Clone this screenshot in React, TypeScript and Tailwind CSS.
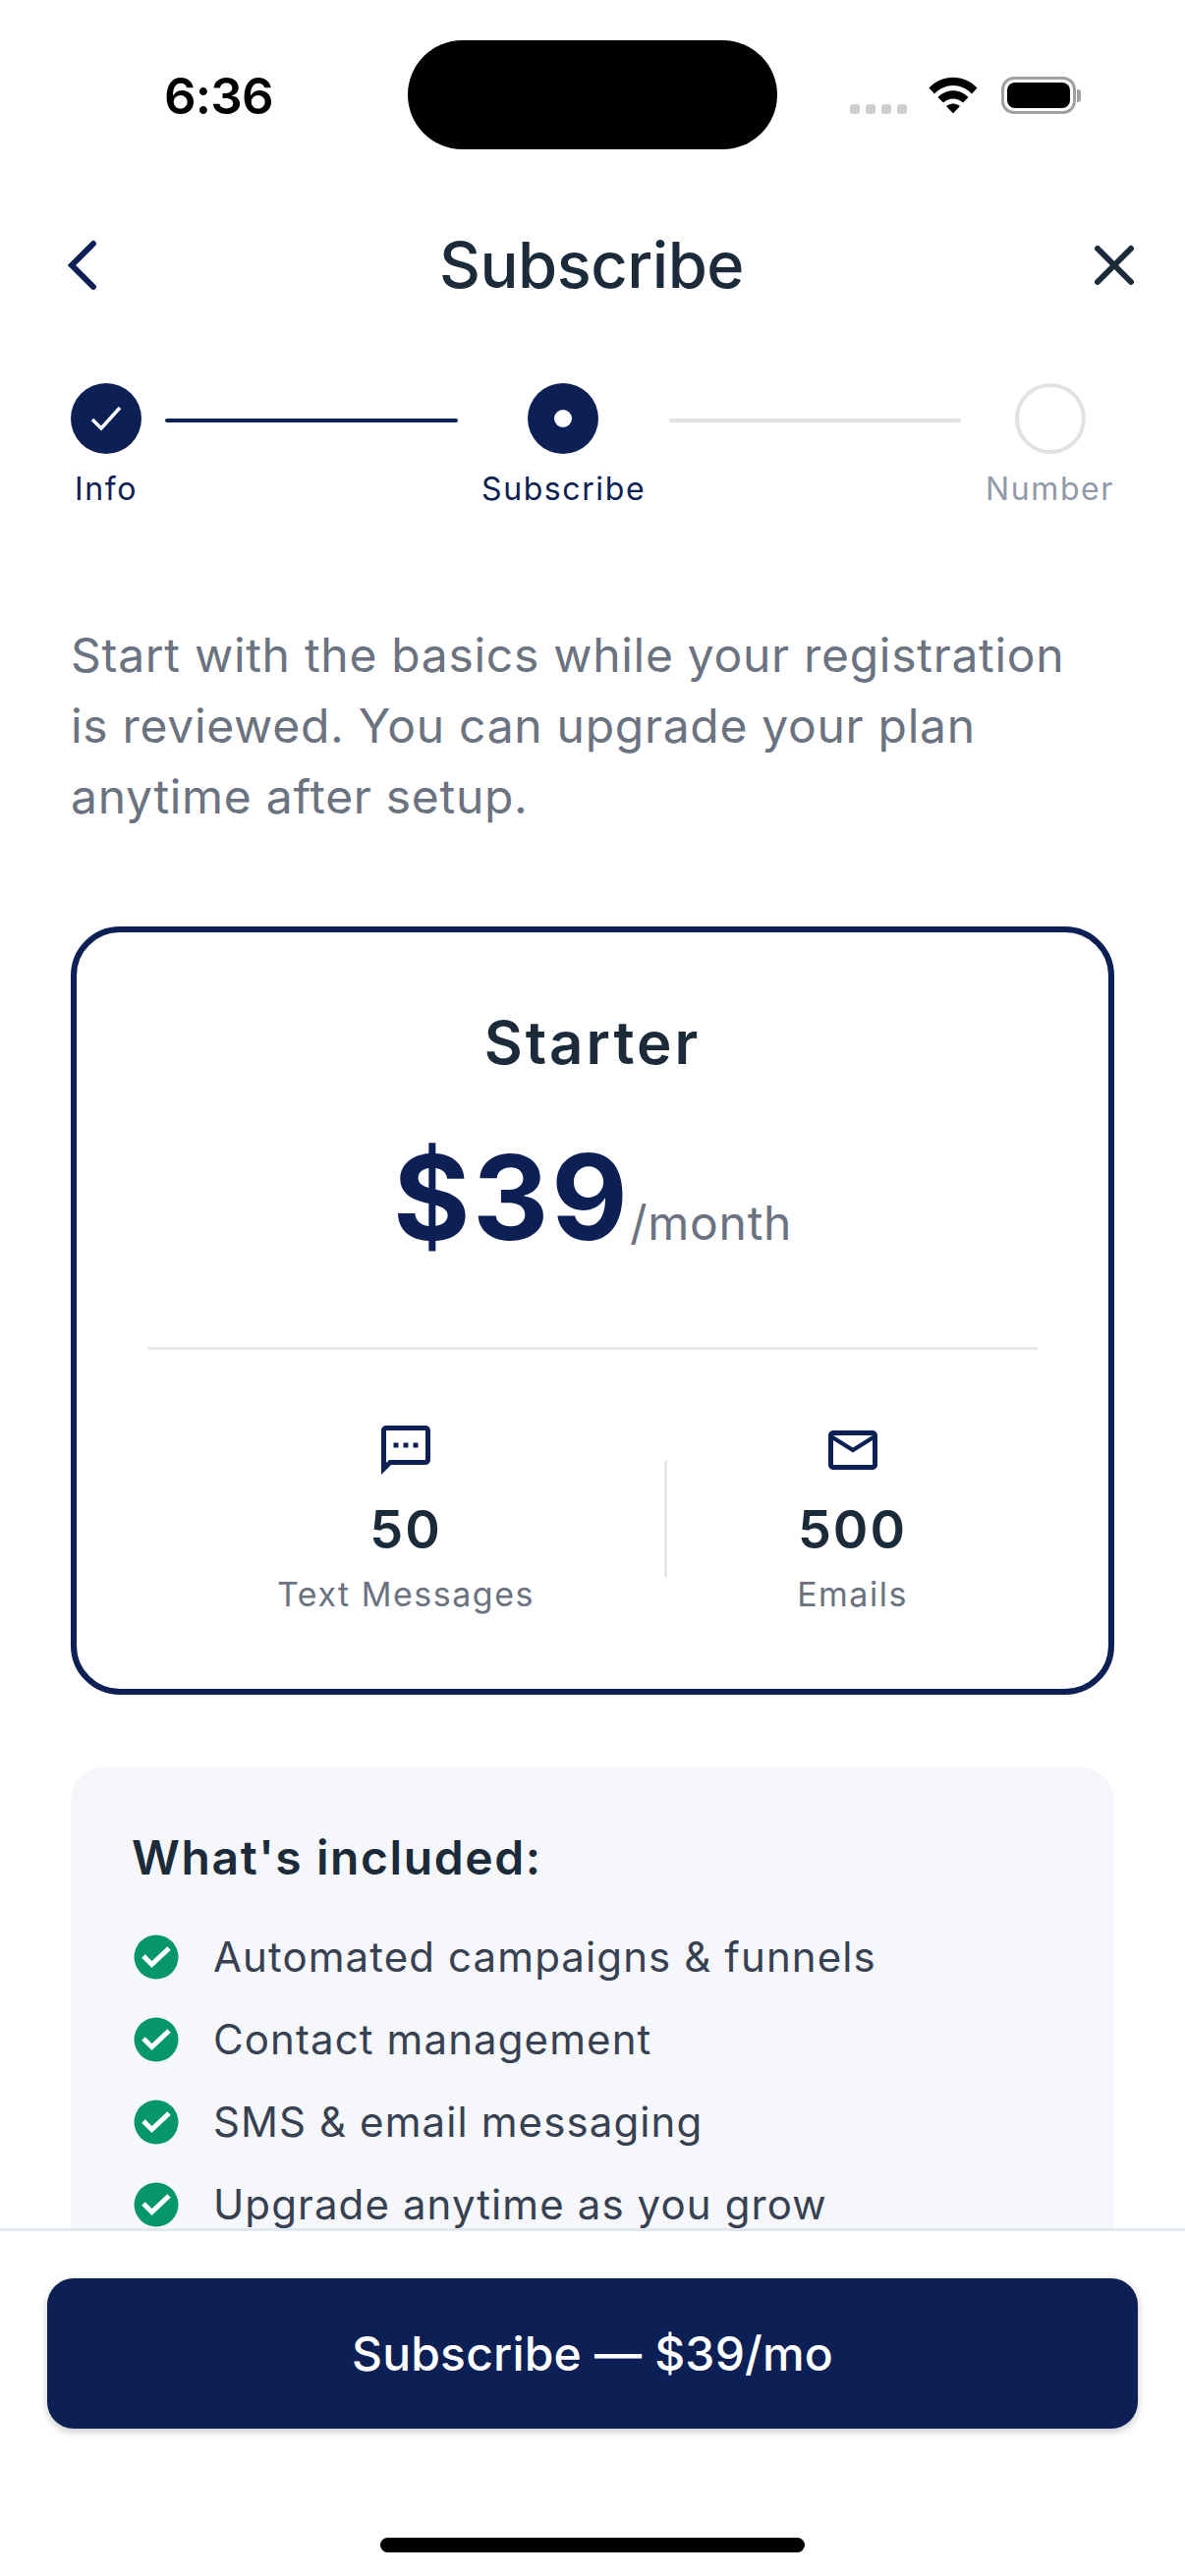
import React from "react";

const features = [
  "Automated campaigns & funnels",
  "Contact management",
  "SMS & email messaging",
  "Upgrade anytime as you grow",
];

const StatusBar: React.FC = () => (
  <div className="relative h-[120px] shrink-0 pt-[70px]">
    <div className="absolute left-[415px] top-[41px] h-[111px] w-[376px] rounded-[56px] bg-black" />
    <span className="absolute left-[167px] top-[66px] text-[51px] leading-[63px] font-semibold tracking-[-0.8px] text-black">
      6:36
    </span>
    <div className="absolute left-[865px] top-[106px] flex gap-[6px]">
      <div className="h-[10px] w-[10px] rounded-[3px] bg-[#cfcfcf]" />
      <div className="h-[10px] w-[10px] rounded-[3px] bg-[#cfcfcf]" />
      <div className="h-[10px] w-[10px] rounded-[3px] bg-[#cfcfcf]" />
      <div className="h-[10px] w-[10px] rounded-[3px] bg-[#cfcfcf]" />
    </div>
    <svg className="absolute left-[945px] top-[78px]" width="50" height="38" viewBox="0 0 50 38">
      <path d="M0.5 11.5 C14 -3 36 -3 49.5 11.5 L44 17.5 C33 6 17 6 6 17.5 Z" fill="#000" />
      <path d="M9.5 21 C18 12 32 12 40.5 21 L35 26.5 C29 21 21 21 15 26.5 Z" fill="#000" />
      <path d="M18 30 C22 26.5 28 26.5 32 30 L25 37.5 Z" fill="#000" />
    </svg>
    <div className="absolute left-[1019px] top-[78px] flex h-[38px] w-[76px] items-center justify-center rounded-[13px] border-[3px] border-[#a0a0a0]">
      <div className="h-[26px] w-[64px] rounded-[8px] bg-black" />
    </div>
    <div className="absolute left-[1096px] top-[91px] h-[13px] w-[4px] rounded-r-[3px] bg-[#a0a0a0]" />
  </div>
);

const NavBar: React.FC = () => (
  <div className="mt-[100px] flex h-[100px] shrink-0 items-center justify-between pr-[48px] pl-[66px]">
    <svg width="36" height="56" viewBox="0 0 36 56" fill="none" stroke="#0d2055" strokeWidth="6" strokeLinecap="round">
      <path d="M29 6 L7 28 L29 50" />
    </svg>
    <span className="mr-[8px] text-[65px] leading-[76px] font-medium tracking-[-0.5px] text-[#1c2b3a]">Subscribe</span>
    <svg width="48" height="48" viewBox="0 0 48 48" fill="none" stroke="#1c2b3a" strokeWidth="6" strokeLinecap="round">
      <path d="M7 7 L41 41 M41 7 L7 41" />
    </svg>
  </div>
);

const Stepper: React.FC = () => (
  <div className="mt-[70px] shrink-0 px-[72px]">
    <div className="flex items-center">
      <div className="flex h-[72px] w-[72px] items-center justify-center rounded-full bg-[#0d2055]">
        <svg width="32" height="28" viewBox="0 0 32 28" fill="none" stroke="#fff" strokeWidth="3.5">
          <path d="M2 15 L11 24 L30 3" />
        </svg>
      </div>
      <div className="mt-[4px] ml-[24px] h-[4px] w-[298px] rounded-full bg-[#0d2055]" />
      <div className="ml-[71px] flex h-[72px] w-[72px] items-center justify-center rounded-full bg-[#0d2055]">
        <div className="h-[18px] w-[18px] rounded-full bg-white" />
      </div>
      <div className="mt-[4px] ml-[72px] h-[4px] w-[297px] rounded-full bg-[#e2e2e2]" />
      <div className="ml-[55px] h-[72px] w-[72px] rounded-full border-[4px] border-[#e2e2e2]" />
    </div>
    <div className="relative mt-[16px] h-[40px] text-[32px] leading-[40px] tracking-[1.6px]">
      <span className="absolute left-[4px] top-0 text-[#0d2055]">Info</span>
      <span className="absolute left-[418px] top-0 text-[#0d2055]">Subscribe</span>
      <span className="absolute right-0 top-0 text-[#9299a8]">Number</span>
    </div>
  </div>
);

const PlanCard: React.FC = () => (
  <div className="mt-[96px] flex h-[782px] flex-col items-center rounded-[50px] border-[6px] border-[#0d2055] px-[72px]">
    <div className="mt-[77px] text-[60px] leading-[70px] font-semibold tracking-[3px] text-[#1c2b3a]">Starter</div>
    <div className="mt-[48px] flex items-baseline">
      <span className="text-[120px] leading-[150px] font-bold tracking-[2.5px] text-[#0d2055]">$39</span>
      <span className="text-[48px] leading-[60px] tracking-[0.7px] text-[#6b7280]">/month</span>
    </div>
    <div className="mt-[77px] h-[3px] w-full shrink-0 bg-[#e9eaee]" />
    <div className="mt-[72px] flex w-full">
      <div className="flex w-[526px] shrink-0 flex-col items-center">
        <svg width="60" height="60" viewBox="0 0 24 24" fill="#0d2055">
          <path d="M20 2H4c-1.1 0-1.99.9-1.99 2L2 22l4-4h14c1.1 0 2-.9 2-2V4c0-1.1-.9-2-2-2zm0 14H5.17L4 17.17V4h16v12zM11 9h2v2h-2zm4 0h2v2h-2zM7 9h2v2H7z" />
        </svg>
        <span className="mt-[19px] text-[54px] leading-[64px] font-semibold tracking-[2px] text-[#1c2b3a]">50</span>
        <span className="mt-[12px] text-[34px] leading-[44px] tracking-[1.5px] text-[#6b7280]">Text Messages</span>
      </div>
      <div className="mt-[41px] h-[118px] w-[3px] shrink-0 bg-[#e5e7eb]" />
      <div className="flex flex-1 flex-col items-center">
        <svg width="60" height="60" viewBox="0 0 24 24" fill="#0d2055">
          <path d="M20 4H4c-1.1 0-1.99.9-1.99 2L2 18c0 1.1.9 2 2 2h16c1.1 0 2-.9 2-2V6c0-1.1-.9-2-2-2zm0 14H4V8l8 5 8-5v10zm-8-7L4 6h16l-8 5z" />
        </svg>
        <span className="mt-[19px] text-[54px] leading-[64px] font-semibold tracking-[2px] text-[#1c2b3a]">500</span>
        <span className="mt-[12px] text-[34px] leading-[44px] tracking-[1.5px] text-[#6b7280]">Emails</span>
      </div>
    </div>
  </div>
);

const Included: React.FC = () => (
  <div className="mt-[73px] rounded-[36px] bg-[#f5f7fb] px-[62px] pt-[65px] pb-[60px]">
    <div className="text-[48px] leading-[56px] font-semibold tracking-[1.6px] text-[#1c2b3a]">What's included:</div>
    <ul className="mt-[45px] flex flex-col gap-[28px]">
      {features.map((f) => (
        <li key={f} className="flex h-[56px] items-center gap-[35px]">
          <svg width="46" height="46" viewBox="0 0 46 46" className="ml-[2px] shrink-0">
            <circle cx="23" cy="23" r="22.5" fill="#05976a" />
            <path d="M10 22 L18.5 30.5 L36 14" fill="none" stroke="#fff" strokeWidth="5" />
          </svg>
          <span className="text-[42px] leading-[56px] tracking-[1.1px] text-[#374151]">{f}</span>
        </li>
      ))}
    </ul>
  </div>
);

export default function App() {
  return (
    <div
      className="relative flex h-[2622px] w-[1206px] flex-col overflow-hidden bg-white"
      style={{ fontFamily: "Inter, 'Noto Sans', sans-serif" }}
    >
      <StatusBar />
      <NavBar />
      <Stepper />
      <div className="min-h-0 flex-1 overflow-hidden px-[72px]">
        <p className="mt-[113px] text-[48px] leading-[72px] tracking-[0.7px] text-[#6b7280]">
          Start with the basics while your registration is reviewed. You can upgrade your plan anytime after setup.
        </p>
        <PlanCard />
        <Included />
      </div>
      <div className="relative h-[354px] shrink-0 border-t-[3px] border-[#e2e8f0] bg-white px-[48px] pt-[48px]">
        <button className="flex h-[153px] w-full items-center justify-center rounded-[27px] bg-[#0d2055] text-[48px] font-medium tracking-[0.2px] text-white shadow-[0_3px_8px_rgba(0,0,0,0.22)]">
          Subscribe — $39/mo
        </button>
        <div className="absolute bottom-[24px] left-[387px] h-[15px] w-[432px] rounded-full bg-black" />
      </div>
    </div>
  );
}
